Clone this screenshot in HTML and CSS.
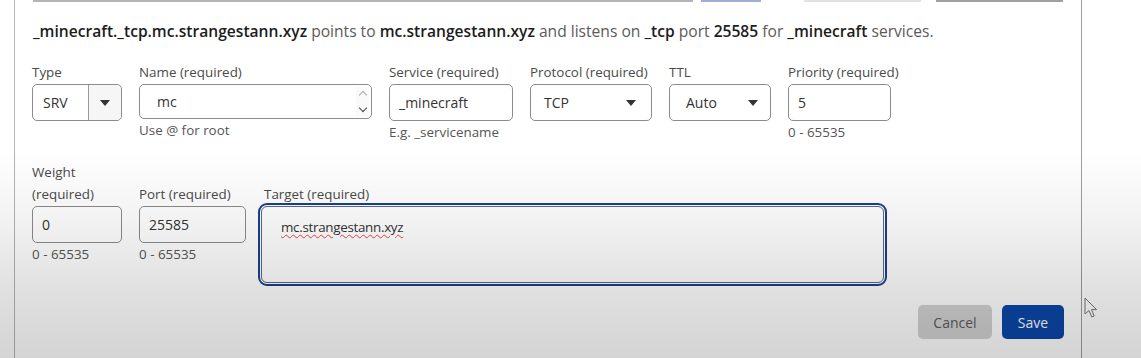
FILE: index.html
```html
<!DOCTYPE html>
<html lang="en">
<head>
  <meta charset="UTF-8">
  <meta name="viewport" content="width=device-width, initial-scale=1.0">
  <title>DNS record - SRV</title>
  <link rel="stylesheet" href="styles.css">
</head>
<body>
  <div class="panel">
    <div class="edges">
      <span class="edge edge-input"></span>
      <span class="edge edge-blue"></span>
      <span class="edge edge-light"></span>
      <span class="edge edge-dark"></span>
    </div>

    <p class="summary">
      <b>_minecraft._tcp.mc.strangestann.xyz</b> points to <b>mc.strangestann.xyz</b> and listens on <b>_tcp</b> port <b>25585</b> for <b>_minecraft</b> services.
    </p>

    <div class="row">
      <div class="field f-type">
        <label>Type</label>
        <div class="box select split">
          <span class="value">SRV</span>
          <span class="split-btn"><i class="caret"></i></span>
        </div>
      </div>
      <div class="field f-name">
        <label>Name (required)</label>
        <div class="box name-box">
          <span class="value">mc</span>
          <span class="spin">
            <i class="spin-up"></i>
            <i class="spin-down"></i>
          </span>
        </div>
        <div class="help">Use @ for root</div>
      </div>
      <div class="field f-service">
        <label>Service (required)</label>
        <div class="box"><span class="value">_minecraft</span></div>
        <div class="help">E.g. _servicename</div>
      </div>
      <div class="field f-proto">
        <label>Protocol (required)</label>
        <div class="box select">
          <span class="value">TCP</span>
          <i class="caret"></i>
        </div>
      </div>
      <div class="field f-ttl">
        <label>TTL</label>
        <div class="box select">
          <span class="value">Auto</span>
          <i class="caret"></i>
        </div>
      </div>
      <div class="field f-prio">
        <label>Priority (required)</label>
        <div class="box"><span class="value">5</span></div>
        <div class="help">0 - 65535</div>
      </div>
    </div>

    <div class="row row-two">
      <div class="field f-weight">
        <label>Weight (required)</label>
        <div class="box"><span class="value">0</span></div>
        <div class="help">0 - 65535</div>
      </div>
      <div class="field f-port">
        <label>Port (required)</label>
        <div class="box"><span class="value">25585</span></div>
        <div class="help">0 - 65535</div>
      </div>
      <div class="field f-target">
        <label>Target (required)</label>
        <div class="box target-box"><span class="typo">mc.strangestann.xyz</span></div>
      </div>
    </div>

    <div class="actions">
      <button class="btn btn-cancel">Cancel</button>
      <button class="btn btn-save">Save</button>
    </div>
  </div>

  <svg class="cursor" width="14" height="22" viewBox="0 0 14 22">
    <path d="M1 1 L1 17 L5 13.5 L7.8 20 L10.2 19 L7.5 12.6 L12.6 12.6 Z" fill="#fff" stroke="#777" stroke-width="1" stroke-linejoin="round"/>
  </svg>

  <div class="shade"></div>
</body>
</html>
```

FILE: styles.css
```css
*{
  margin: 0;
  padding: 0;
  box-sizing: border-box;
}
html,body{
  height: 100%;
  overflow: hidden;
}
body{
  background: #fff;
  color: #333;
  font-family: "Open Sans", "Noto Sans", sans-serif;
  font-size: 13px;
}
.panel{
  width: 1068px;
  height: 358px;
  margin-left: 14px;
  padding: 0 17px 0 18px;
  border-left: 1px solid #b4b4b4;
  border-right: 1px solid #9e9e9e;
}
.edges{
  display: flex;
  height: 2px;
}
.edge{
  display: block;
  height: 2px;
}
.edge-input{
  width: 660px;
  background: #b4b4b4;
}
.edge-blue{
  width: 60px;
  margin-left: 8px;
  background: #a3acd6;
}
.edge-light{
  width: 117px;
  margin-left: 43px;
  background: #e2e2e2;
}
.edge-dark{
  width: 127px;
  margin-left: 15px;
  background: #a0a0a0;
}
.summary{
  margin-top: 19px;
  font-size: 15.6px;
  line-height: 20px;
  color: #5a5a5a;
}
.summary b{
  color: #1c1c1c;
  font-weight: 600;
}
.row{
  display: flex;
  gap: 17px;
  margin-top: 20px;
}
.row-two{
  margin-top: 19px;
}
.field{
  display: flex;
  flex-direction: column;
}
.field label{
  display: block;
  color: #4a4a4a;
  font-size: 13.4px;
  line-height: 22px;
  margin-bottom: 1px;
  white-space: nowrap;
}
.row-two .field label{
  height: 44px;
  display: flex;
  align-items: flex-end;
  white-space: normal;
}
.f-type{ width: 90px; margin-left: -1px; }
.f-name{ width: 233px; }
.f-service{ width: 124px; }
.f-proto{ width: 122px; }
.f-ttl{ width: 102px; }
.f-prio{ width: 103px; }
.f-weight{ width: 90px; margin-left: -1px; }
.f-port{ width: 107px; }
.f-target{ width: 623px; margin-left: -2px; }
.f-target label{ padding-left: 3px; }

.box{
  position: relative;
  display: flex;
  align-items: center;
  height: 37px;
  border: 1px solid #8c8c8c;
  border-radius: 5px;
  background: #fff;
  font-size: 14px;
  color: #333;
  padding-left: 9px;
}
.f-type .box{ padding-left: 10px; }
.f-proto .box{ padding-left: 13px; }
.f-ttl .box{ padding-left: 16px; }
.name-box{
  height: 35px;
  padding-left: 17px;
}
.select{
  justify-content: space-between;
  padding-right: 15px;
}
.f-ttl .select{ padding-right: 12px; }
.caret{
  display: block;
  width: 0;
  height: 0;
  border-left: 5px solid transparent;
  border-right: 5px solid transparent;
  border-top: 6px solid #333;
}
.split{
  padding-right: 0;
}
.split-btn{
  display: flex;
  align-items: center;
  justify-content: center;
  width: 33px;
  height: 100%;
  border-left: 1px solid #9a9a9a;
  background: #f6f6f6;
  border-radius: 0 5px 5px 0;
}
.spin{
  position: absolute;
  right: 2px;
  top: 2px;
  bottom: 2px;
  width: 13px;
  display: flex;
  flex-direction: column;
  justify-content: space-between;
  align-items: center;
  padding: 3px 0;
  background: #fafafa;
}
.spin i{
  display: block;
  width: 6px;
  height: 6px;
  border-left: 1.5px solid #aaa;
  border-top: 1.5px solid #aaa;
}
.spin-up{
  transform: translateY(2px) rotate(45deg);
}
.spin .spin-down{
  border-color: #444;
  transform: translateY(-2px) rotate(225deg);
}
.target-box{
  height: 77px;
  align-items: flex-start;
  padding: 11px 19px;
  border-color: #5b6a8a;
  border-radius: 6px;
  outline: 2px solid #1d3f8f;
  outline-offset: 1px;
  font-size: 13.4px;
  letter-spacing: -0.3px;
}
.typo{
  text-decoration: underline wavy #e04848;
  text-decoration-thickness: 1px;
  text-underline-offset: 2px;
}
.help{
  margin-top: 1px;
  color: #555;
  font-size: 13.4px;
  line-height: 20px;
}
.actions{
  display: flex;
  justify-content: flex-end;
  gap: 10px;
  margin-top: 22px;
}
.btn{
  height: 34px;
  border: none;
  border-radius: 5px;
  font-family: "Open Sans", "Noto Sans", sans-serif;
  font-size: 14px;
}
.btn-cancel{
  width: 74px;
  background: #d2d2d2;
  color: #5c5c5c;
}
.btn-save{
  width: 62px;
  background: #0b47a8;
  color: #fff;
}
.cursor{
  position: fixed;
  left: 1084px;
  top: 297px;
}
.shade{
  position: fixed;
  left: 0;
  top: 0;
  right: 0;
  bottom: 0;
  pointer-events: none;
  background: linear-gradient(to bottom, rgba(0,0,0,0) 0, rgba(0,0,0,0) 150px, rgba(0,0,0,.05) 220px, rgba(0,0,0,.12) 290px, rgba(0,0,0,.17) 358px);
}
```
